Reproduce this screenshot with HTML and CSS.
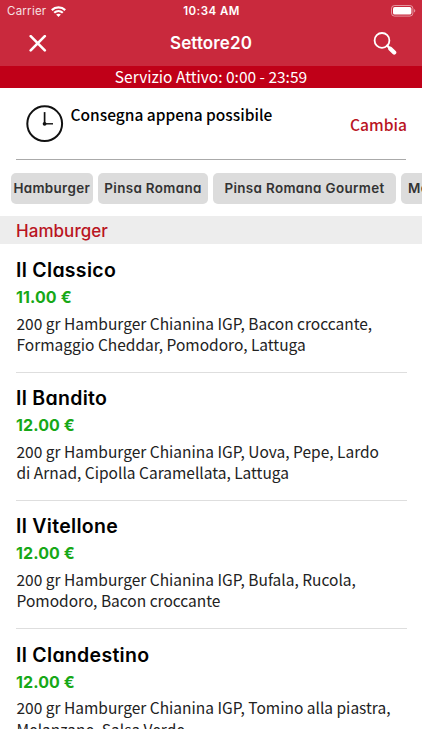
FILE: index.html
```html
<!DOCTYPE html>
<html lang="it">
<head>
    <meta charset="UTF-8">
    <meta name="viewport" content="width=device-width, initial-scale=1.0">
    <title>Settore20</title>
    <link rel="stylesheet" href="styles.css">
</head>
<body>

<header>
    <div class="status-bar">
        <div class="carrier">
            <span>Carrier</span>
            <svg class="wifi" width="15" height="11" viewBox="0 0 15 11" fill="none" stroke="#fff" stroke-width="2.2">
                <path d="M0.8 4.1C4.6 0.4 10.4 0.4 14.2 4.1"/>
                <path d="M3.2 6.8C5.7 4.5 9.3 4.5 11.8 6.8"/>
                <path d="M7.5 10.9L5.1 8.6C6.5 7.4 8.5 7.4 9.9 8.6Z" fill="#fff" stroke="none"/>
            </svg>
        </div>
        <span class="time">10:34 AM</span>
        <svg class="battery" width="25" height="12" viewBox="0 0 25 12">
            <rect x="0.5" y="0.5" width="21.4" height="10.6" rx="3" fill="none" stroke="#fff" stroke-opacity="0.5"/>
            <rect x="2" y="2" width="18.4" height="7.6" rx="1.7" fill="#fff"/>
            <path d="M23.2 4v3.6c1.4-.6 1.4-3 0-3.6z" fill="#fff" fill-opacity="0.6"/>
        </svg>
    </div>
    <nav>
        <svg class="close" width="18" height="18" viewBox="0 0 18 18" fill="none" stroke="#fff" stroke-width="2.6" stroke-linecap="round">
            <path d="M1.7 1.2L15.8 15.4M15.8 1.2L1.7 15.4"/>
        </svg>
        <h1>Settore20</h1>
        <svg class="search" width="24" height="24" viewBox="0 0 24 24" fill="none" stroke="#fff" stroke-linecap="round">
            <circle cx="9" cy="8.4" r="7.4" stroke-width="1.8"/>
            <path d="M14.2 13.6l3 3" stroke-width="2.2"/>
            <path d="M17.3 16.7l3.9 3.9" stroke-width="4.2"/>
        </svg>
    </nav>
    <p class="service">Servizio Attivo: 0:00 - 23:59</p>
</header>

<section class="delivery">
    <svg class="clock" width="38" height="38" viewBox="0 0 38 38" fill="none" stroke="#111">
        <circle cx="18.7" cy="18.7" r="17.4" stroke-width="2"/>
        <path d="M18.6 7.1V19" stroke-width="1.7"/>
        <path d="M18.6 18.8H27" stroke-width="1.4"/>
        <circle cx="18.6" cy="18.8" r="1.9" fill="#111" stroke="none"/>
    </svg>
    <p>Consegna appena possibile</p>
    <a href="#">Cambia</a>
</section>

<div class="categories">
    <a class="chip hamburger" href="#">Hamburger</a>
    <a class="chip pinsa" href="#">Pinsa Romana</a>
    <a class="chip gourmet" href="#">Pinsa Romana Gourmet</a>
    <a class="chip menu" href="#">Menu</a>
</div>

<main>
    <h2>Hamburger</h2>
    <article>
        <h3>Il Classico</h3>
        <p class="price">11.00 €</p>
        <p class="description">200 gr Hamburger Chianina IGP, Bacon croccante,<br>Formaggio Cheddar, Pomodoro, Lattuga</p>
    </article>
    <article>
        <h3>Il Bandito</h3>
        <p class="price">12.00 €</p>
        <p class="description">200 gr Hamburger Chianina IGP, Uova, Pepe, Lardo<br>di Arnad, Cipolla Caramellata, Lattuga</p>
    </article>
    <article>
        <h3>Il Vitellone</h3>
        <p class="price">12.00 €</p>
        <p class="description">200 gr Hamburger Chianina IGP, Bufala, Rucola,<br>Pomodoro, Bacon croccante</p>
    </article>
    <article>
        <h3>Il Clandestino</h3>
        <p class="price">12.00 €</p>
        <p class="description">200 gr Hamburger Chianina IGP, Tomino alla piastra,<br>Melanzane, Salsa Verde</p>
    </article>
</main>

</body>
</html>
```
FILE: styles.css
```css
:root {
    --primary: #C9293D;
    --accent: #C00018;
    --link: #B91422;
    --price: #17A817;
    --sans: 'Noto Sans CJK JP', 'Open Sans', sans-serif;
    --display: Inter, sans-serif;
}

* {
    margin: 0;
    padding: 0;
    box-sizing: border-box;
}

body {
    height: 750px;
    overflow: hidden;
    background: #fff;
    color: #000;
    font-family: var(--sans);
    font-variant-ligatures: none;
}

a {
    text-decoration: none;
}

/* Header */
header {
    background: var(--primary);
    color: #fff;
    font-family: var(--display);
}

.status-bar {
    display: grid;
    grid-template-columns: 1fr auto 1fr;
    align-items: center;
    height: 22px;
    padding: 0 6px 0 7px;
    font-size: 11.5px;
}

.carrier {
    display: flex;
    align-items: center;
    gap: 5px;
    letter-spacing: 0.25px;
}

.carrier span {
    opacity: 0.85;
}

.time {
    font-weight: 600;
    font-size: 11.5px;
    letter-spacing: 0.45px;
}

.battery {
    justify-self: end;
}

nav {
    display: grid;
    grid-template-columns: 1fr auto 1fr;
    align-items: center;
    height: 44px;
    padding: 0 25px 0 29px;
}

nav h1 {
    margin: -2px 4px 0 0;
    font-size: 17px;
    font-weight: 600;
    letter-spacing: 0.1px;
}

.search {
    justify-self: end;
}

.service {
    height: 22px;
    background: var(--accent);
    font-family: var(--sans);
    font-size: 15.5px;
    line-height: 20px;
    text-align: center;
}

/* Delivery */
.delivery {
    display: flex;
    height: 72px;
    margin: 0 16px;
    padding: 17px 0 0 10px;
    border-bottom: 1px solid #aaa;
}

.delivery p {
    flex: 1;
    margin: -2px 0 0 6.5px;
    font-size: 15.5px;
    font-weight: 500;
    line-height: 22px;
}

.delivery a {
    margin: 8px -1px 0 0;
    color: var(--link);
    font-size: 15.6px;
    font-weight: 500;
    line-height: 22px;
}

/* Categories */
.categories {
    display: flex;
    gap: 5px;
    height: 56px;
    padding: 13px 0 0 10.5px;
    overflow: hidden;
}

/* cv11 switches to the single-storey a */
.chip,
h3 {
    font-family: var(--display);
    font-feature-settings: 'cv11';
    font-weight: 600;
}

.chip {
    flex: none;
    height: 31px;
    border-radius: 5px;
    background: #DCDCDC;
    color: #333;
    font-size: 13.4px;
    letter-spacing: 0.35px;
    line-height: 31px;
    text-align: center;
    white-space: nowrap;
}

.hamburger { width: 82.5px; }
.pinsa { width: 110px; }
.gourmet { width: 183px; }

.menu {
    padding: 0 7px;
}

/* Menu list */
main {
    height: 513px;
    overflow: hidden;
}

h2 {
    height: 28px;
    padding-left: 16px;
    background: #EDEDED;
    color: var(--link);
    font-family: var(--display);
    font-size: 17px;
    font-weight: 500;
    letter-spacing: 0.05px;
    line-height: 30px;
}

article {
    height: 128.3px;
    margin: 0 15px 0 16px;
    padding-top: 11.4px;
    border-bottom: 1px solid #DEDEDE;
}

article:first-of-type {
    height: 128.6px;
    padding-top: 12px;
}

h3 {
    font-size: 19.5px;
    letter-spacing: 0.3px;
    line-height: 28px;
}

.price {
    color: var(--price);
    font-family: var(--display);
    font-size: 16px;
    font-weight: 700;
    letter-spacing: 0.1px;
    line-height: 26px;
}

.description {
    margin: 2.6px 0 0 0.5px;
    color: #222;
    font-size: 15.5px;
    line-height: 21.6px;
    white-space: nowrap;
}
```
